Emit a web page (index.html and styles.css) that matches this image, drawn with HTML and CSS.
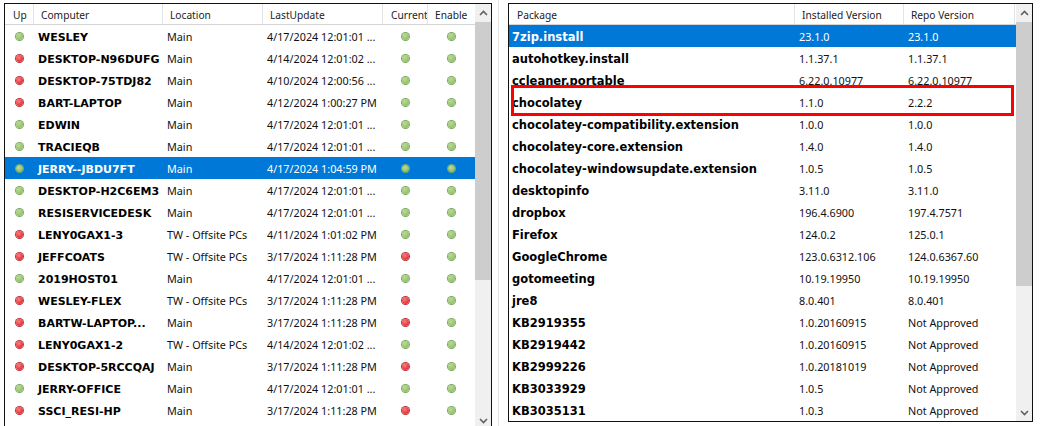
FILE: index.html
```html
<!DOCTYPE html>
<html lang="en">
<head>
<meta charset="utf-8">
<title>Computers and packages</title>
<link rel="stylesheet" href="styles.css">
</head>
<body>
<div class="split">
<section class="panel left">
<div class="list">
<div class="row head">
<span class="c-up">Up</span><span class="c-comp">Computer</span><span class="c-loc">Location</span><span class="c-upd">LastUpdate</span><span class="c-cur">Current</span><span class="c-en">Enable</span>
</div>
<div class="row"><span class="c-up"><i class="dot g"></i></span><b class="c-comp">WESLEY</b><span class="c-loc">Main</span><span class="c-upd">4/17/2024 12:01:01 ...</span><span class="c-cur"><i class="dot g"></i></span><span class="c-en"><i class="dot g"></i></span></div>
<div class="row"><span class="c-up"><i class="dot r"></i></span><b class="c-comp">DESKTOP-N96DUFG</b><span class="c-loc">Main</span><span class="c-upd">4/14/2024 12:01:02 ...</span><span class="c-cur"><i class="dot g"></i></span><span class="c-en"><i class="dot g"></i></span></div>
<div class="row"><span class="c-up"><i class="dot r"></i></span><b class="c-comp">DESKTOP-75TDJ82</b><span class="c-loc">Main</span><span class="c-upd">4/10/2024 12:00:56 ...</span><span class="c-cur"><i class="dot g"></i></span><span class="c-en"><i class="dot g"></i></span></div>
<div class="row"><span class="c-up"><i class="dot r"></i></span><b class="c-comp">BART-LAPTOP</b><span class="c-loc">Main</span><span class="c-upd">4/12/2024 1:00:27 PM</span><span class="c-cur"><i class="dot g"></i></span><span class="c-en"><i class="dot g"></i></span></div>
<div class="row"><span class="c-up"><i class="dot g"></i></span><b class="c-comp">EDWIN</b><span class="c-loc">Main</span><span class="c-upd">4/17/2024 12:01:01 ...</span><span class="c-cur"><i class="dot g"></i></span><span class="c-en"><i class="dot g"></i></span></div>
<div class="row"><span class="c-up"><i class="dot g"></i></span><b class="c-comp">TRACIEQB</b><span class="c-loc">Main</span><span class="c-upd">4/17/2024 12:01:01 ...</span><span class="c-cur"><i class="dot g"></i></span><span class="c-en"><i class="dot g"></i></span></div>
<div class="row sel"><span class="c-up"><i class="dot g"></i></span><b class="c-comp">JERRY--JBDU7FT</b><span class="c-loc">Main</span><span class="c-upd">4/17/2024 1:04:59 PM</span><span class="c-cur"><i class="dot g"></i></span><span class="c-en"><i class="dot g"></i></span></div>
<div class="row"><span class="c-up"><i class="dot g"></i></span><b class="c-comp">DESKTOP-H2C6EM3</b><span class="c-loc">Main</span><span class="c-upd">4/17/2024 12:01:01 ...</span><span class="c-cur"><i class="dot g"></i></span><span class="c-en"><i class="dot g"></i></span></div>
<div class="row"><span class="c-up"><i class="dot g"></i></span><b class="c-comp">RESISERVICEDESK</b><span class="c-loc">Main</span><span class="c-upd">4/17/2024 12:01:01 ...</span><span class="c-cur"><i class="dot g"></i></span><span class="c-en"><i class="dot g"></i></span></div>
<div class="row"><span class="c-up"><i class="dot r"></i></span><b class="c-comp">LENY0GAX1-3</b><span class="c-loc">TW - Offsite PCs</span><span class="c-upd">4/11/2024 1:01:02 PM</span><span class="c-cur"><i class="dot g"></i></span><span class="c-en"><i class="dot g"></i></span></div>
<div class="row"><span class="c-up"><i class="dot r"></i></span><b class="c-comp">JEFFCOATS</b><span class="c-loc">TW - Offsite PCs</span><span class="c-upd">3/17/2024 1:11:28 PM</span><span class="c-cur"><i class="dot r"></i></span><span class="c-en"><i class="dot g"></i></span></div>
<div class="row"><span class="c-up"><i class="dot g"></i></span><b class="c-comp">2019HOST01</b><span class="c-loc">Main</span><span class="c-upd">4/17/2024 12:01:01 ...</span><span class="c-cur"><i class="dot g"></i></span><span class="c-en"><i class="dot g"></i></span></div>
<div class="row"><span class="c-up"><i class="dot r"></i></span><b class="c-comp">WESLEY-FLEX</b><span class="c-loc">TW - Offsite PCs</span><span class="c-upd">3/17/2024 1:11:28 PM</span><span class="c-cur"><i class="dot r"></i></span><span class="c-en"><i class="dot g"></i></span></div>
<div class="row"><span class="c-up"><i class="dot r"></i></span><b class="c-comp">BARTW-LAPTOP...</b><span class="c-loc">Main</span><span class="c-upd">3/17/2024 1:11:28 PM</span><span class="c-cur"><i class="dot r"></i></span><span class="c-en"><i class="dot g"></i></span></div>
<div class="row"><span class="c-up"><i class="dot r"></i></span><b class="c-comp">LENY0GAX1-2</b><span class="c-loc">TW - Offsite PCs</span><span class="c-upd">4/14/2024 12:01:02 ...</span><span class="c-cur"><i class="dot g"></i></span><span class="c-en"><i class="dot g"></i></span></div>
<div class="row"><span class="c-up"><i class="dot r"></i></span><b class="c-comp">DESKTOP-5RCCQAJ</b><span class="c-loc">Main</span><span class="c-upd">3/17/2024 1:11:28 PM</span><span class="c-cur"><i class="dot r"></i></span><span class="c-en"><i class="dot g"></i></span></div>
<div class="row"><span class="c-up"><i class="dot g"></i></span><b class="c-comp">JERRY-OFFICE</b><span class="c-loc">Main</span><span class="c-upd">4/17/2024 12:01:01 ...</span><span class="c-cur"><i class="dot g"></i></span><span class="c-en"><i class="dot g"></i></span></div>
<div class="row"><span class="c-up"><i class="dot r"></i></span><b class="c-comp">SSCI_RESI-HP</b><span class="c-loc">Main</span><span class="c-upd">3/17/2024 1:11:28 PM</span><span class="c-cur"><i class="dot r"></i></span><span class="c-en"><i class="dot g"></i></span></div>
</div>
<div class="scroll left-scroll">
<svg class="arrow" viewBox="0 0 9 6"><path d="M1 5l3.5-3.5L8 5"/></svg>
<div class="thumb"></div>
<svg class="arrow down" viewBox="0 0 9 6"><path d="M1 1l3.5 3.5L8 1"/></svg>
</div>
</section>
<div class="divider"></div>
<section class="panel right">
<div class="list">
<div class="row head">
<span class="c-pkg">Package</span><span class="c-inst">Installed Version</span><span class="c-repo">Repo Version</span>
</div>
<div class="row sel"><b class="c-pkg">7zip.install</b><span class="c-inst">23.1.0</span><span class="c-repo">23.1.0</span></div>
<div class="row"><b class="c-pkg">autohotkey.install</b><span class="c-inst">1.1.37.1</span><span class="c-repo">1.1.37.1</span></div>
<div class="row"><b class="c-pkg">ccleaner.portable</b><span class="c-inst">6.22.0.10977</span><span class="c-repo">6.22.0.10977</span></div>
<div class="row"><b class="c-pkg">chocolatey</b><span class="c-inst">1.1.0</span><span class="c-repo">2.2.2</span></div>
<div class="row"><b class="c-pkg">chocolatey-compatibility.extension</b><span class="c-inst">1.0.0</span><span class="c-repo">1.0.0</span></div>
<div class="row"><b class="c-pkg">chocolatey-core.extension</b><span class="c-inst">1.4.0</span><span class="c-repo">1.4.0</span></div>
<div class="row"><b class="c-pkg">chocolatey-windowsupdate.extension</b><span class="c-inst">1.0.5</span><span class="c-repo">1.0.5</span></div>
<div class="row"><b class="c-pkg">desktopinfo</b><span class="c-inst">3.11.0</span><span class="c-repo">3.11.0</span></div>
<div class="row"><b class="c-pkg">dropbox</b><span class="c-inst">196.4.6900</span><span class="c-repo">197.4.7571</span></div>
<div class="row"><b class="c-pkg">Firefox</b><span class="c-inst">124.0.2</span><span class="c-repo">125.0.1</span></div>
<div class="row"><b class="c-pkg">GoogleChrome</b><span class="c-inst">123.0.6312.106</span><span class="c-repo">124.0.6367.60</span></div>
<div class="row"><b class="c-pkg">gotomeeting</b><span class="c-inst">10.19.19950</span><span class="c-repo">10.19.19950</span></div>
<div class="row"><b class="c-pkg">jre8</b><span class="c-inst">8.0.401</span><span class="c-repo">8.0.401</span></div>
<div class="row"><b class="c-pkg">KB2919355</b><span class="c-inst">1.0.20160915</span><span class="c-repo">Not Approved</span></div>
<div class="row"><b class="c-pkg">KB2919442</b><span class="c-inst">1.0.20160915</span><span class="c-repo">Not Approved</span></div>
<div class="row"><b class="c-pkg">KB2999226</b><span class="c-inst">1.0.20181019</span><span class="c-repo">Not Approved</span></div>
<div class="row"><b class="c-pkg">KB3033929</b><span class="c-inst">1.0.5</span><span class="c-repo">Not Approved</span></div>
<div class="row"><b class="c-pkg">KB3035131</b><span class="c-inst">1.0.3</span><span class="c-repo">Not Approved</span></div>
</div>
<div class="scroll right-scroll">
<svg class="arrow" viewBox="0 0 9 6"><path d="M1 5l3.5-3.5L8 5"/></svg>
<div class="thumb"></div>
<svg class="arrow down" viewBox="0 0 9 6"><path d="M1 1l3.5 3.5L8 1"/></svg>
</div>
<div class="callout"></div>
</section>
</div>
</body>
</html>
```
FILE: styles.css
```css
* { box-sizing: border-box; }
html, body { margin: 0; height: 100%; overflow: hidden; background: #fff; }
body { font-family: "Noto Sans", "Liberation Sans", sans-serif; font-size: 10.8px; color: #111; }
.split { display: flex; height: 426px; padding: 3px 10px 0 4px; }
.panel { position: relative; display: flex; flex: none; border: 1px solid #111; background: #fff; overflow: hidden; }
.left { width: 488px; height: 430px; }
.right { width: 525px; height: 419px; }
.divider { flex: none; width: 1px; height: 426px; margin: -3px 9px 0 6px; background: #e3e3e3; }
.list { flex: 1; min-width: 0; }
.row { display: flex; align-items: center; height: 22px; padding-top: 2px; white-space: nowrap; }
.row > * { flex: none; overflow: hidden; padding-left: 4px; }
.row > span { padding-bottom: 2px; }
.row b { font-family: "DejaVu Sans", sans-serif; font-size: 11.5px; font-weight: 700; color: #000; padding-left: 3px; }
.left .row b { font-size: 11px; padding-left: 4px; }
.row.head { height: 21px; padding-top: 0; border-bottom: 1px solid #d5d5d5; color: #222; font-size: 10.2px; }
.head > span { display: flex; align-items: center; height: 20px; padding: 2px 0 0 7px; border-right: 1px solid #e5e5e5; }
.row.sel { background: #0078d7; color: #fff; }
.row.sel b { color: #fff; }
.c-up { width: 29px; text-align: center; }
.c-comp { width: 129px; }
.c-loc { width: 100px; }
.c-upd { width: 120px; }
.c-cur { width: 45px; text-align: center; }
.c-en { width: 46px; text-align: center; }
.row .c-up, .row .c-cur, .row .c-en { padding-left: 0; overflow: visible; }
.head .c-up { padding-left: 8px; }
.head .c-cur { padding-left: 8px; overflow: hidden; }
.head .c-en { padding-left: 7px; border-right: 0; }
.c-pkg { width: 286px; }
.c-inst { width: 109px; }
.c-repo { width: 111px; }
.head .c-pkg { padding-left: 8px; }
.dot { display: block; width: 7px; height: 7px; margin: 0 auto; border-radius: 50%; }
.dot.g { background: radial-gradient(circle at 40% 35%, #bddb95, #8fc067 70%); box-shadow: 0 0 0 1px #7aa95c; }
.dot.r { background: radial-gradient(circle at 40% 35%, #f68080, #e2303a 70%); box-shadow: 0 0 0 1px #c8303a; }
.scroll { flex: none; width: 16px; display: flex; flex-direction: column; align-items: center; background: #f0f0f0; }
.thumb { flex: none; width: 100%; background: #cdcdcd; }
.left-scroll .thumb { height: 258px; }
.right-scroll .thumb { height: 264px; }
.arrow { flex: none; width: 9px; height: 6px; margin: 6px 0; fill: none; stroke: #606060; stroke-width: 1.6; }
.arrow.down { margin-top: auto; margin-bottom: 5px; }
.left-scroll .arrow.down { margin-bottom: 8px; }
.callout { position: absolute; left: 2px; top: 81px; width: 503px; height: 31px; border: 3px solid #f00; }
```
